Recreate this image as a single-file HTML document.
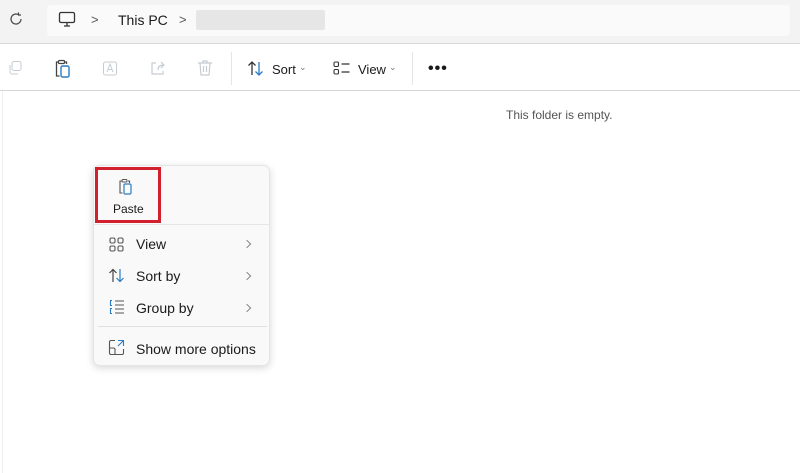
<!DOCTYPE html>
<html><head><style>
*{margin:0;padding:0;box-sizing:border-box}
body{width:800px;height:473px;overflow:hidden;background:#fff;font-family:"Liberation Sans",sans-serif;position:relative;color:#1a1a1a}
.top{position:absolute;left:0;top:0;width:800px;height:44px;background:#f3f3f3;border-bottom:1px solid #d9d9d9}
.addr{position:absolute;left:47px;top:5px;width:743px;height:31px;background:#fafafa;border-radius:4px}
.tb{position:absolute;left:0;top:44px;width:800px;height:47px;background:#fff;border-bottom:1px solid #d5d5d5}
.abs{position:absolute}
.t{position:absolute;font-size:13px;white-space:nowrap}
.menu{position:absolute;left:93px;top:165px;width:177px;height:201px;background:#f9f9f9;border-radius:7px;box-shadow:0 2px 8px rgba(0,0,0,.16);border:1px solid #e5e5e5}
.mi{position:absolute;left:42px;font-size:14px;color:#1a1a1a}
.chev{position:absolute;left:150px;width:6px;height:6px;border-right:1.2px solid #888;border-top:1.2px solid #888;transform:rotate(45deg)}
</style></head><body>
<div class="top"></div>
<div class="addr"></div>
<svg class="abs" style="left:8px;top:11px" width="16" height="16" viewBox="0 0 16 16"><path d="M13 8A5 5 0 1 1 10.5 3.7M10.5 1.5V4H13" fill="none" stroke="#444" stroke-width="1.2"/></svg>
<svg class="abs" style="left:58px;top:11px" width="18" height="17" viewBox="0 0 18 17"><rect x="1.5" y="1.5" width="15" height="10" rx="1.5" fill="none" stroke="#333" stroke-width="1.3"/><path d="M6 15H12M9 12V15" stroke="#333" stroke-width="1.3"/></svg>
<div class="t" style="left:91px;top:12px;font-size:13px;color:#555">&gt;</div>
<div class="t" style="left:118px;top:12px;font-size:14px">This PC</div>
<div class="t" style="left:179px;top:12px;font-size:13px;color:#555">&gt;</div>
<div class="abs" style="left:196px;top:10px;width:129px;height:20px;background:#e6e6e6;border-radius:2px"></div>
<div class="tb"></div>
<svg class="abs" style="left:7px;top:60px" width="16" height="16" viewBox="0 0 16 16"><rect x="5" y="1.5" width="9" height="9" rx="2" fill="none" stroke="#c5ccd3"/><path d="M3 5v7a2 2 0 0 0 2 2h6" fill="none" stroke="#c5ccd3"/></svg>
<svg class="abs" style="left:54px;top:59px" width="18" height="19" viewBox="0 0 18 19"><path d="M4 3H2.5v14h3M11 3h1.5v2" fill="none" stroke="#444" stroke-width="1.3"/><rect x="4.5" y="1.5" width="6" height="3" rx="1" fill="none" stroke="#444" stroke-width="1.2"/><rect x="7" y="7" width="8" height="11" rx="1.5" fill="none" stroke="#2b7cc4" stroke-width="1.4"/></svg>
<svg class="abs" style="left:102px;top:60px" width="18" height="17" viewBox="0 0 18 17"><rect x="1.5" y="2" width="13" height="13" rx="2" fill="none" stroke="#c5ccd3"/><path d="M5 12L8 4L11 12M6 9.5H10" fill="none" stroke="#c5ccd3"/></svg>
<svg class="abs" style="left:149px;top:60px" width="18" height="17" viewBox="0 0 18 17"><path d="M7 3H3v11h11v-3M9 10c0-4 3-5 6-5M12 2l3 3-3 3" fill="none" stroke="#c5ccd3" stroke-width="1.2"/></svg>
<svg class="abs" style="left:197px;top:59px" width="16" height="18" viewBox="0 0 16 18"><path d="M1 4h14M6 4V2h4v2M3 4l1 12h8l1-12M6.5 7v6M9.5 7v6" fill="none" stroke="#c5ccd3" stroke-width="1.2"/></svg>
<div class="abs" style="left:231px;top:52px;width:1px;height:33px;background:#e5e5e5"></div>
<svg class="abs" style="left:247px;top:60px" width="18" height="17" viewBox="0 0 18 17"><path d="M5 15V2M1.5 5.5L5 2l3.5 3.5" fill="none" stroke="#333" stroke-width="1.3"/><path d="M12 2v13M8.5 11.5L12 15l3.5-3.5" fill="none" stroke="#2b7cc4" stroke-width="1.3"/></svg>
<div class="t" style="left:272px;top:62px">Sort</div>
<div class="t" style="left:299px;top:62px;font-size:9px;color:#777">⌄</div>
<svg class="abs" style="left:333px;top:61px" width="18" height="14" viewBox="0 0 18 14"><rect x="1" y="1" width="4.5" height="4.5" rx="1.2" fill="none" stroke="#333" stroke-width="1.1"/><rect x="1" y="8.5" width="4.5" height="4.5" rx="1.2" fill="none" stroke="#333" stroke-width="1.1"/><path d="M8.5 3h8M8.5 11h8" stroke="#333" stroke-width="1.2"/></svg>
<div class="t" style="left:358px;top:62px">View</div>
<div class="t" style="left:389px;top:62px;font-size:9px;color:#777">⌄</div>
<div class="abs" style="left:412px;top:52px;width:1px;height:33px;background:#e5e5e5"></div>
<div class="t" style="left:428px;top:60px;font-size:16px;font-weight:bold;letter-spacing:1px">•••</div>
<div class="abs" style="left:2px;top:91px;width:1px;height:382px;background:#eee"></div>
<div class="t" style="left:506px;top:108px;font-size:12px;color:#555">This folder is empty.</div>
<div class="menu">
 <div class="abs" style="left:1px;top:1px;width:66px;height:56px;border:3px solid #d21f2d"></div>
 <svg class="abs" style="left:24px;top:12px" width="16" height="18" viewBox="0 0 16 18"><path d="M3.5 3H2v12h2.5M10 3h1.5v2" fill="none" stroke="#555" stroke-width="1.1"/><rect x="4" y="1.5" width="5" height="2.5" rx="1" fill="none" stroke="#555"/><rect x="6" y="6" width="7" height="10" rx="1.3" fill="none" stroke="#2b7cc4" stroke-width="1.2"/></svg>
 <div class="t" style="left:19px;top:36px;font-size:12px">Paste</div>
 <div class="abs" style="left:0;top:58px;width:175px;height:1px;background:#e6e6e6"></div>
 <svg class="abs" style="left:15px;top:71px" width="15" height="15" viewBox="0 0 15 15"><g fill="none" stroke="#555" stroke-width="1.1"><rect x="1" y="1" width="5" height="5" rx="1.5"/><rect x="9" y="1" width="5" height="5" rx="1.5"/><rect x="1" y="9" width="5" height="5" rx="1.5"/><rect x="9" y="9" width="5" height="5" rx="1.5"/></g></svg>
 <div class="mi" style="top:70px">View</div><div class="chev" style="top:75px"></div>
 <svg class="abs" style="left:14px;top:102px" width="18" height="15" viewBox="0 0 18 15"><path d="M5 14V1.5M1.5 5L5 1.5 8.5 5" fill="none" stroke="#444" stroke-width="1.2"/><path d="M12 1v12.5M8.5 10l3.5 3.5 3.5-3.5" fill="none" stroke="#2b7cc4" stroke-width="1.2"/></svg>
 <div class="mi" style="top:102px">Sort by</div><div class="chev" style="top:107px"></div>
 <svg class="abs" style="left:15px;top:133px" width="16" height="16" viewBox="0 0 16 16"><path d="M6 2h9M6 6h9M6 10h9M6 14h9" stroke="#555" stroke-width="1.1"/><path d="M3 1.5H1.5v5H3M3 9.5H1.5v5H3" fill="none" stroke="#2b7cc4" stroke-width="1.1"/></svg>
 <div class="mi" style="top:134px">Group by</div><div class="chev" style="top:139px"></div>
 <div class="abs" style="left:4px;top:160px;width:169px;height:1px;background:#e0e0e0"></div>
 <svg class="abs" style="left:14px;top:173px" width="17" height="17" viewBox="0 0 17 17"><path d="M7 1.5H3A1.5 1.5 0 0 0 1.5 3v11A1.5 1.5 0 0 0 3 15.5h11a1.5 1.5 0 0 0 1.5-1.5v-4M1.5 9h4a1.5 1.5 0 0 1 1.5 1.5v5" fill="none" stroke="#555" stroke-width="1.1"/><path d="M10 1.5h5.5V7M15.5 1.5L10 7" fill="none" stroke="#2b7cc4" stroke-width="1.1"/></svg>
 <div class="mi" style="top:175px">Show more options</div>
</div>
</body></html>
